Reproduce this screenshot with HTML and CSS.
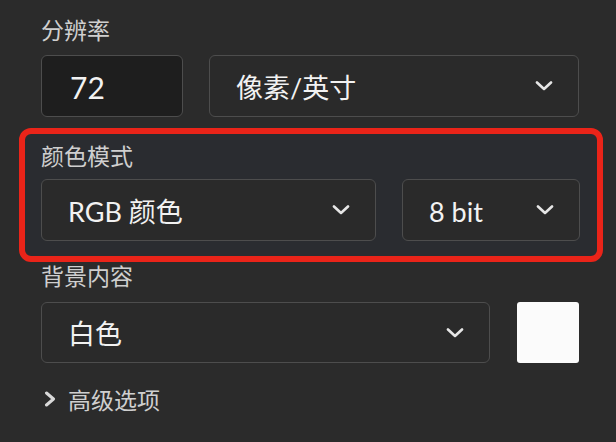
FILE: index.html
```html
<!DOCTYPE html>
<html lang="zh-CN">
<head>
<meta charset="utf-8">
<link rel="stylesheet" href="styles.css">
</head>
<body>
<div class="panel">
  <div class="label">分辨率</div>
  <div class="row row-res">
    <div class="field input"><span class="value">72</span></div>
    <div class="field select"><span class="value">像素/英寸</span>
      <svg class="chev" viewBox="0 0 18 10"><polyline points="2,1.5 9,8 16,1.5"/></svg></div>
  </div>

  <div class="highlight">
    <div class="label label-in">颜色模式</div>
    <div class="row row-mode">
      <div class="field select"><span class="value">RGB 颜色</span>
        <svg class="chev" viewBox="0 0 18 10"><polyline points="2,1.5 9,8 16,1.5"/></svg></div>
      <div class="field select"><span class="value">8 bit</span>
        <svg class="chev" viewBox="0 0 18 10"><polyline points="2,1.5 9,8 16,1.5"/></svg></div>
    </div>
  </div>

  <div class="label label-bg">背景内容</div>
  <div class="row row-bg">
    <div class="field select"><span class="value">白色</span>
      <svg class="chev" viewBox="0 0 18 10"><polyline points="2,1.5 9,8 16,1.5"/></svg></div>
    <div class="swatch"></div>
  </div>

  <div class="advanced">
    <svg class="arrow" viewBox="0 0 14 16"><polyline points="3.5,2 10.5,8 3.5,14"/></svg>
    <span>高级选项</span>
  </div>
</div>
</body>
</html>
```

FILE: styles.css
```css
html, body {
  margin: 0;
  padding: 0;
  background: #2b2b2b;
}
body {
  width: 616px;
  height: 442px;
  overflow: hidden;
  font-family: "Lato", "Noto Sans CJK SC", sans-serif;
}
.panel {
  padding: 17px 37px 0 41px;
  width: 538px;
}
.label {
  font-family: "Noto Sans CJK SC", sans-serif;
  font-size: 23px;
  line-height: 24px;
  color: #cfcfcf;
  margin-bottom: 14px;
}
.row {
  display: grid;
  height: 62px;
}
.row-res {
  grid-template-columns: 142px 1fr;
  column-gap: 26px;
}
.row-mode {
  grid-template-columns: 1fr 178px;
  column-gap: 26px;
}
.row-bg {
  grid-template-columns: 1fr 62px;
  column-gap: 27px;
  height: 61px;
}
.field {
  box-sizing: border-box;
  border: 1px solid #4d4d4d;
  border-radius: 6px;
  background: #2a2a2a;
  display: flex;
  align-items: center;
  padding: 0 25px 0 26px;
}
.input {
  background: #1e1e1e;
}
.select {
  justify-content: space-between;
}
.value {
  font-size: 27px;
  color: #f2f2f2;
  line-height: 1;
  padding-top: 2px;
}
.input .value {
  font-size: 30px;
  padding-left: 2px;
}
.chev {
  width: 18px;
  height: 10px;
  flex: none;
}
.chev polyline {
  fill: none;
  stroke: #e6e6e6;
  stroke-width: 2.6;
  stroke-linecap: round;
  stroke-linejoin: round;
}
.highlight {
  margin: 11px -24px 1px -22px;
  border: 6px solid #ea2419;
  border-radius: 12px;
  background: #2a2c30;
  padding: 9px 17px 15px 16px;
}
.label-in {
  margin-bottom: 12px;
}
.label-bg {
  margin-bottom: 15px;
}
.swatch {
  background: #fbfbfb;
  border-radius: 3px;
}
.advanced {
  display: flex;
  align-items: center;
  gap: 11px;
  margin-top: 24px;
  padding-left: 2px;
  height: 24px;
}
.advanced .arrow {
  width: 14px;
  height: 16px;
}
.advanced .arrow polyline {
  fill: none;
  stroke: #d9d9d9;
  stroke-width: 3;
  stroke-linecap: round;
  stroke-linejoin: round;
}
.advanced span {
  font-family: "Noto Sans CJK SC", sans-serif;
  font-size: 23px;
  line-height: 24px;
  color: #cfcfcf;
}
```
